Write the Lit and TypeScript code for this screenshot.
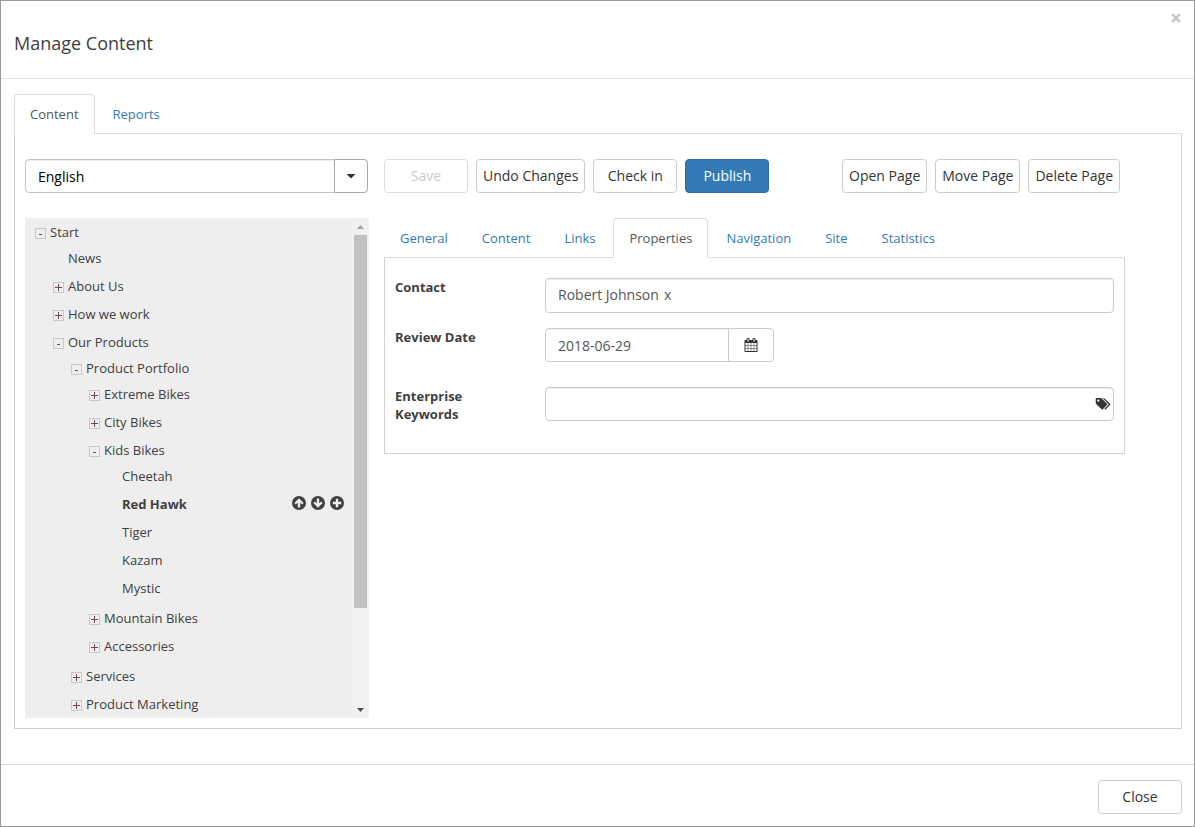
import { LitElement, html, css, svg, nothing } from "lit";
import { customElement, state } from "lit/decorators.js";
import { classMap } from "lit/directives/class-map.js";

interface TreeNode {
  label: string;
  open?: boolean;
  leaf?: boolean;
  children?: TreeNode[];
}

const TREE: TreeNode[] = [
  {
    label: "Start",
    open: true,
    children: [
      { label: "News", leaf: true },
      { label: "About Us" },
      { label: "How we work" },
      {
        label: "Our Products",
        open: true,
        children: [
          {
            label: "Product Portfolio",
            open: true,
            children: [
              { label: "Extreme Bikes" },
              { label: "City Bikes" },
              {
                label: "Kids Bikes",
                open: true,
                children: [
                  { label: "Cheetah", leaf: true },
                  { label: "Red Hawk", leaf: true },
                  { label: "Tiger", leaf: true },
                  { label: "Kazam", leaf: true },
                  { label: "Mystic", leaf: true },
                ],
              },
              { label: "Mountain Bikes" },
              { label: "Accessories" },
            ],
          },
          { label: "Services" },
          { label: "Product Marketing" },
        ],
      },
    ],
  },
];

const disc = (sign: unknown) => html`
  <svg class="disc" viewBox="0 0 14 14" aria-hidden="true">
    <circle cx="7" cy="7" r="7" fill="#404040" />
    ${sign}
  </svg>
`;

const ARROW_UP = svg`<path d="M7 2.2 L11.6 6.9 L10.1 8.4 L8.2 6.6 V11.4 H5.8 V6.6 L3.9 8.4 L2.4 6.9 Z" fill="#eee"/>`;
const ARROW_DOWN = svg`<path d="M7 11.8 L2.4 7.1 L3.9 5.6 L5.8 7.4 V2.6 H8.2 V7.4 L10.1 5.6 L11.6 7.1 Z" fill="#eee"/>`;
const PLUS = svg`<path d="M5.8 2.8 H8.2 V5.8 H11.2 V8.2 H8.2 V11.2 H5.8 V8.2 H2.8 V5.8 H5.8 Z" fill="#eee"/>`;

@customElement("page-tree")
export class PageTree extends LitElement {
  @state() private selected = "Red Hawk";

  static styles = css`
    :host {
      display: grid;
      grid-template-columns: minmax(0, 1fr) 17px;
      height: 500px;
      background: #eee;
      color: #404040;
      font: 13px/28px "Open Sans", sans-serif;
    }
    .scroll {
      overflow: hidden;
      padding: 0 8px 0 10px;
    }
    ul {
      margin: 0;
      padding: 0;
      list-style: none;
    }
    ul ul {
      margin: -2px 0 2px;
      padding-left: 18px;
    }
    .row {
      display: flex;
      align-items: center;
      height: 28px;
      gap: 4px;
    }
    .toggle {
      box-sizing: border-box;
      flex: none;
      display: grid;
      place-items: center;
      width: 11px;
      height: 11px;
      margin-top: 3px;
      padding: 0;
      border: 1px solid #c8c8c8;
      background: none;
    }
    .toggle svg {
      width: 9px;
      height: 9px;
    }
    .spacer {
      flex: none;
      width: 11px;
    }
    .page {
      color: inherit;
      text-decoration: none;
    }
    .page.current {
      font-weight: 700;
    }
    .actions {
      display: flex;
      gap: 5px;
      margin-left: auto;
      padding-bottom: 2px;
    }
    .action {
      display: block;
      width: 14px;
      height: 14px;
      padding: 0;
      border: 0;
      background: none;
    }
    .disc {
      display: block;
      width: 14px;
      height: 14px;
    }
    .bar {
      display: grid;
      grid-template-rows: 17px 1fr 17px;
      justify-items: center;
      align-items: center;
      background: #f1f1f1;
    }
    .thumb {
      align-self: start;
      width: 13px;
      height: 80%;
      background: #c1c1c1;
    }
    .arrow {
      width: 7px;
      height: 4px;
    }
  `;

  private node(n: TreeNode): unknown {
    const current = n.label === this.selected;
    return html`<li>
      <div class="row">
        ${n.leaf
          ? html`<span class="spacer"></span>`
          : html`<button class="toggle" aria-expanded=${n.open ? "true" : "false"} aria-label=${n.label}>
              <svg viewBox="0 0 9 9" stroke="#6b4a58" aria-hidden="true">
                ${n.open ? svg`<path d="M3 5.5H6"/>` : svg`<path d="M1 4.5H8M4.5 1V8"/>`}
              </svg>
            </button>`}
        <a
          class=${classMap({ page: true, current })}
          href="#"
          @click=${(e: Event) => {
            e.preventDefault();
            this.selected = n.label;
          }}
          >${n.label}</a
        >
        ${current
          ? html`<span class="actions">
              <button class="action" aria-label="Move up">${disc(ARROW_UP)}</button>
              <button class="action" aria-label="Move down">${disc(ARROW_DOWN)}</button>
              <button class="action" aria-label="Add page">${disc(PLUS)}</button>
            </span>`
          : nothing}
      </div>
      ${n.open && n.children ? html`<ul>${n.children.map((c) => this.node(c))}</ul>` : nothing}
    </li>`;
  }

  render() {
    return html`
      <div class="scroll"><ul>${TREE.map((n) => this.node(n))}</ul></div>
      <div class="bar" aria-hidden="true">
        <svg class="arrow" viewBox="0 0 7 4"><path d="M0 4L3.5 0L7 4Z" fill="#a3a3a3" /></svg>
        <span class="thumb"></span>
        <svg class="arrow" viewBox="0 0 7 4"><path d="M0 0L3.5 4L7 0Z" fill="#505050" /></svg>
      </div>
    `;
  }
}

@customElement("tab-strip")
export class TabStrip extends LitElement {
  static properties = { tabs: { attribute: false }, active: {} };
  declare tabs: string[];
  declare active: string;

  static styles = css`
    :host {
      display: block;
      font: 13px/18px "Open Sans", sans-serif;
    }
    .tabs {
      display: flex;
      gap: 2px;
      border-bottom: 1px solid #ddd;
    }
    .tab {
      padding: 10px 15px;
      margin-bottom: -1px;
      border: 1px solid transparent;
      border-radius: 4px 4px 0 0;
      color: #337ab7;
      text-decoration: none;
    }
    .tab.active {
      border-color: #ddd #ddd #fff;
      background: #fff;
      color: #555;
    }
  `;

  render() {
    return html`<nav class="tabs">
      ${this.tabs.map(
        (t) => html`<a
          class=${classMap({ tab: true, active: t === this.active })}
          href="#"
          @click=${(e: Event) => {
            e.preventDefault();
            this.active = t;
          }}
          >${t}</a
        >`
      )}
    </nav>`;
  }
}

@customElement("app-root")
export class AppRoot extends LitElement {
  static styles = css`
    :host {
      display: block;
      color: #404040;
      font: 14px/20px "Open Sans", sans-serif;
    }
    * {
      box-sizing: border-box;
    }
    .dialog {
      display: flex;
      flex-direction: column;
      min-height: 100vh;
      border: 1px solid #999;
      background: #fff;
    }
    .head {
      display: flex;
      justify-content: space-between;
      align-items: flex-start;
      padding: 8px 13px 23px;
      border-bottom: 1px solid #e5e5e5;
    }
    .title {
      margin: 22px 0 0;
      font-size: 18px;
      font-weight: 400;
      line-height: 24px;
    }
    .dismiss {
      display: grid;
      place-items: center;
      width: 10px;
      height: 18px;
      padding: 0;
      border: 0;
      background: none;
    }
    .dismiss svg {
      width: 10px;
      height: 10px;
    }
    .main {
      flex: 1;
      padding: 15px 12px 35px 13px;
    }
    .panel {
      display: flex;
      gap: 15px;
      padding: 25px 56px 10px 10px;
      border: 1px solid #d0d0d0;
      border-top: 0;
    }
    .side {
      flex: 0 0 344px;
      display: grid;
      gap: 25px;
    }
    .work {
      flex: 1;
      min-width: 0;
    }
    .language {
      position: relative;
      margin-right: 1px;
    }
    .language select {
      display: block;
      appearance: none;
      width: 100%;
      height: 34px;
      padding: 2px 46px 0 12px;
      border: 1px solid #c4c4c4;
      border-radius: 4px;
      background: #fff;
      box-shadow: inset 0 1px 1px #00000013;
      color: #000;
      font: inherit;
    }
    .caret {
      position: absolute;
      inset: 0 0 0 auto;
      display: grid;
      place-items: center;
      width: 34px;
      border: 1px solid #aaa;
      border-radius: 0 4px 4px 0;
      background: #fff;
      pointer-events: none;
    }
    .caret svg {
      width: 10px;
      height: 5px;
    }
    .toolbar {
      display: flex;
      gap: 8px;
      margin-bottom: 25px;
      padding-right: 5px;
    }
    .pages {
      display: flex;
      gap: 8px;
      margin-left: auto;
    }
    .btn {
      min-width: 84px;
      height: 34px;
      padding: 0 6px;
      border: 1px solid #ccc;
      border-radius: 4px;
      background: #fff;
      color: #333;
      font: inherit;
      white-space: nowrap;
    }
    .btn:disabled {
      border-color: #ddd;
      color: #ccc;
    }
    .btn.primary {
      border-color: #2e6da4;
      background: #337ab7;
      color: #fff;
    }
    .form {
      display: grid;
      grid-template-columns: 100px minmax(0, 1fr);
      column-gap: 50px;
      padding: 20px 10px 30px;
      border: 1px solid #d0d0d0;
      border-top: 0;
    }
    .label {
      font-size: 13px;
      font-weight: 700;
      line-height: 18px;
    }
    .field {
      display: flex;
      align-items: center;
      height: 34px;
      margin-bottom: 15px;
      border: 1px solid #ccc;
      border-radius: 4px;
      box-shadow: inset 0 1px 1px #00000013;
      color: #555;
    }
    .field.people {
      height: 35px;
      padding: 0 12px 2px;
      gap: 5px;
    }
    .field.date {
      width: 229px;
      margin-bottom: 25px;
    }
    .field.words {
      margin: 0;
      padding-right: 2px;
    }
    .remove {
      padding: 0;
      border: 0;
      background: none;
      color: inherit;
      font: 14px/20px "Open Sans", sans-serif;
    }
    .input {
      flex: 1;
      min-width: 0;
      height: 100%;
      padding: 0 12px;
      border: 0;
      background: none;
      color: inherit;
      font: inherit;
      outline: 0;
    }
    .pick {
      display: grid;
      place-items: center;
      width: 45px;
      height: 100%;
      padding: 0;
      border: 0;
      border-left: 1px solid #ccc;
      border-radius: 0 4px 4px 0;
      background: #fff;
    }
    .pick svg {
      width: 14px;
      height: 14px;
    }
    .browse {
      display: block;
      padding: 0;
      border: 0;
      background: none;
    }
    .browse svg {
      display: block;
      width: 16px;
      height: 14px;
    }
    .foot {
      display: flex;
      justify-content: flex-end;
      padding: 15px 12px 12px;
      border-top: 1px solid #d5d5d5;
    }
  `;

  render() {
    return html`
      <div class="dialog" role="dialog" aria-labelledby="title">
        <header class="head">
          <h1 class="title" id="title">Manage Content</h1>
          <button class="dismiss" aria-label="Dismiss">
            <svg viewBox="0 0 9 9" stroke="#c4c4c4" stroke-width="2"><path d="M1 1L8 8M8 1L1 8" /></svg>
          </button>
        </header>
        <main class="main">
          <tab-strip .tabs=${["Content", "Reports"]} active="Content"></tab-strip>
          <section class="panel">
            <div class="side">
              <div class="language">
                <select aria-label="Language">
                  <option>English</option>
                </select>
                <span class="caret">
                  <svg viewBox="0 0 10 5"><path d="M.5 0H9.5L5 4.5Z" fill="#333" /></svg>
                </span>
              </div>
              <page-tree></page-tree>
            </div>
            <div class="work">
              <div class="toolbar">
                <button class="btn" disabled>Save</button>
                <button class="btn">Undo Changes</button>
                <button class="btn">Check in</button>
                <button class="btn primary">Publish</button>
                <div class="pages">
                  <button class="btn">Open Page</button>
                  <button class="btn">Move Page</button>
                  <button class="btn">Delete Page</button>
                </div>
              </div>
              <tab-strip
                .tabs=${["General", "Content", "Links", "Properties", "Navigation", "Site", "Statistics"]}
                active="Properties"
              ></tab-strip>
              <form class="form">
                <label class="label" for="contact">Contact</label>
                <div class="field people">
                  <span>Robert Johnson</span>
                  <button class="remove" type="button" aria-label="Remove Robert Johnson">x</button>
                  <input class="input" id="contact" type="text" />
                </div>
                <label class="label" for="review">Review Date</label>
                <div class="field date">
                  <input class="input" id="review" type="text" value="2018-06-29" />
                  <button class="pick" type="button" aria-label="Pick a date">
                    <svg viewBox="0 0 1792 1792" fill="#333">
                      <path
                        d="M192 1664h288v-288h-288v288zm352 0h320v-288h-320v288zm-352-352h288v-320h-288v320zm352 0h320v-320h-320v320zm-352-384h288v-288h-288v288zm736 736h320v-288h-320v288zm-384-736h320v-288h-320v288zm768 736h288v-288h-288v288zm-384-352h320v-320h-320v320zm-352-864v-288q0-13-9.5-22.5t-22.5-9.5h-64q-13 0-22.5 9.5t-9.5 22.5v288q0 13 9.5 22.5t22.5 9.5h64q13 0 22.5-9.5t9.5-22.5zm736 864h288v-320h-288v320zm-384-384h320v-288h-320v288zm384 0h288v-288h-288v288zm32-480v-288q0-13-9.5-22.5t-22.5-9.5h-64q-13 0-22.5 9.5t-9.5 22.5v288q0 13 9.5 22.5t22.5 9.5h64q13 0 22.5-9.5t9.5-22.5zm384-64v1280q0 52-38 90t-90 38h-1408q-52 0-90-38t-38-90v-1280q0-52 38-90t90-38h128v-96q0-66 47-113t113-47h64q66 0 113 47t47 113v96h384v-96q0-66 47-113t113-47h64q66 0 113 47t47 113v96h128q52 0 90 38t38 90z"
                      />
                    </svg>
                  </button>
                </div>
                <label class="label" for="words">Enterprise Keywords</label>
                <div class="field words">
                  <input class="input" id="words" type="text" />
                  <button class="browse" type="button" aria-label="Browse keywords">
                    <svg viewBox="0 0 16 14" fill="#333">
                      <path
                        fill-rule="evenodd"
                        d="M1.6 1H5.6Q6.2 1 6.7 1.5L12 6.8Q12.5 7.4 12 8L7.8 12.3Q7.2 12.8 6.6 12.3L1.2 7Q.7 6.5 .7 5.8V2Q.7 1 1.6 1ZM3.3 2.5A1.1 1.1 0 1 0 3.3 4.7A1.1 1.1 0 1 0 3.3 2.5Z"
                      />
                      <path d="M7.6 1H8.4Q9 1 9.5 1.5L15 6.8Q15.5 7.4 15 8L10.8 12.3Q10.2 12.8 9.6 12.3L9.2 11.9L13.2 7.9Q13.6 7.4 13.2 6.9Z" />
                    </svg>
                  </button>
                </div>
              </form>
            </div>
          </section>
        </main>
        <footer class="foot"><button class="btn">Close</button></footer>
      </div>
    `;
  }
}
